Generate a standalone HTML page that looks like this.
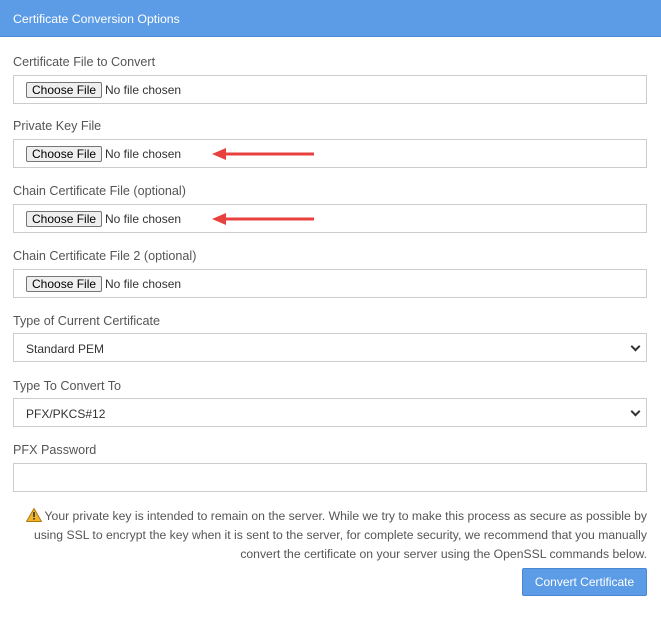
<!DOCTYPE html>
<html><head><style>
body{margin:0;width:661px;height:623px;background:#fff;font-family:"Liberation Sans",sans-serif;position:relative;overflow:hidden}
.hdr{position:absolute;left:0;top:0;width:661px;height:37px;background:#5c9be6;border-bottom:1px solid #4a86d4;color:#fff;font-size:12.3px;line-height:38px;padding-left:13px;box-sizing:border-box}
.lbl{position:absolute;left:13px;font-size:12.6px;color:#555}
.box{position:absolute;left:13px;width:634px;height:29px;border:1px solid #ccc;box-sizing:border-box;font-size:12px;color:#555}
.fb{position:absolute;left:12px;top:6px;height:16px;border:1px solid #767676;background:#efefef;font-size:12px;color:#000;line-height:14px;padding:0 5px;box-sizing:border-box;border-radius:2px}
.nf{position:absolute;left:91px;top:7px;color:#333;font-size:12px}
.sel{padding-left:12px;line-height:30px;color:#333}
.chev{position:absolute;right:7px;top:9px;width:5px;height:5px;border-right:2px solid #333;border-bottom:2px solid #333;transform:rotate(45deg)}
.arrow{position:absolute;left:212px;width:104px;height:14px}
.warn{position:absolute;right:14px;top:507px;width:640px;text-align:right;font-size:12.2px;color:#555;line-height:19px}
.btn{position:absolute;left:522px;top:568px;width:125px;height:28px;background:#5c9be6;border:1px solid #4a86d4;box-sizing:border-box;color:#fff;font-size:12px;line-height:26px;text-align:center;border-radius:2px}
</style></head><body>
<div class="hdr">Certificate Conversion Options</div>
<div class="lbl" style="top:55px">Certificate File to Convert</div>
<div class="box" style="top:75px"><span class="fb">Choose File</span><span class="nf">No file chosen</span></div>
<div class="lbl" style="top:119px">Private Key File</div>
<div class="box" style="top:139px"><span class="fb">Choose File</span><span class="nf">No file chosen</span></div>
<svg class="arrow" style="top:147px" viewBox="0 0 104 14"><line x1="10" y1="7" x2="102" y2="7" stroke="#e8403e" stroke-width="3"/><polygon points="0,7 14,1 14,13" fill="#e8403e"/></svg>
<div class="lbl" style="top:184px">Chain Certificate File (optional)</div>
<div class="box" style="top:204px"><span class="fb">Choose File</span><span class="nf">No file chosen</span></div>
<svg class="arrow" style="top:212px" viewBox="0 0 104 14"><line x1="10" y1="7" x2="102" y2="7" stroke="#e8403e" stroke-width="3"/><polygon points="0,7 14,1 14,13" fill="#e8403e"/></svg>
<div class="lbl" style="top:249px">Chain Certificate File 2 (optional)</div>
<div class="box" style="top:269px"><span class="fb">Choose File</span><span class="nf">No file chosen</span></div>
<div class="lbl" style="top:314px">Type of Current Certificate</div>
<div class="box sel" style="top:333px">Standard PEM<span class="chev"></span></div>
<div class="lbl" style="top:379px">Type To Convert To</div>
<div class="box sel" style="top:398px">PFX/PKCS#12<span class="chev"></span></div>
<div class="lbl" style="top:443px">PFX Password</div>
<div class="box" style="top:463px"></div>
<div class="warn"><svg width="16" height="14" viewBox="0 0 16 14" style="vertical-align:-2px;margin-right:3px"><polygon points="8,0.5 15.5,13.5 0.5,13.5" fill="#f0b429" stroke="#b07a10"/><rect x="7.2" y="4" width="1.6" height="5" fill="#333"/><rect x="7.2" y="10" width="1.6" height="1.6" fill="#333"/></svg>Your private key is intended to remain on the server. While we try to make this process as secure as possible by<br>using SSL to encrypt the key when it is sent to the server, for complete security, we recommend that you manually<br>convert the certificate on your server using the OpenSSL commands below.</div>
<div class="btn">Convert Certificate</div>
</body></html>
